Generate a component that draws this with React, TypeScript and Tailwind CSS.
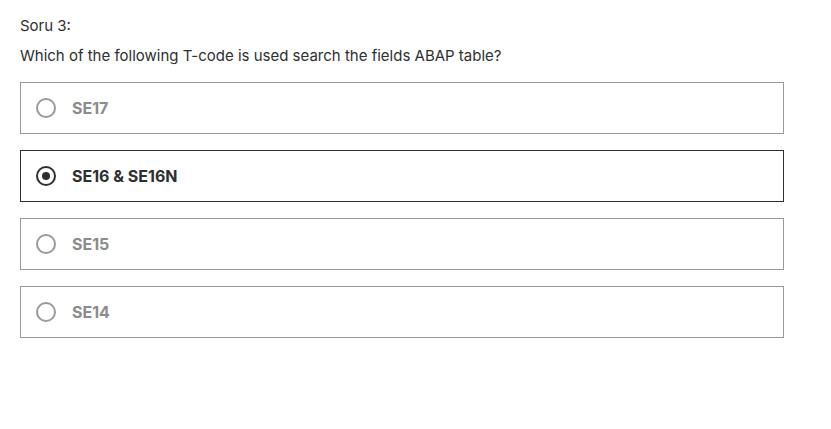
const options = ['SE17', 'SE16 & SE16N', 'SE15', 'SE14'];

const App = () => {
  const selected = 1;

  return (
    <div className="min-h-screen bg-white px-5 pt-[16px] text-[#2d2f31]" style={{ fontFamily: 'Inter, "Noto Sans", sans-serif' }}>
      <p className="text-[15px] leading-[20px]">Soru 3:</p>
      <p className="mt-[10px] text-[15px] leading-[20px]">Which of the following T-code is used search the fields ABAP table?</p>
      <div className="mt-[16px] flex w-[764px] flex-col gap-4">
        {options.map((opt, i) => {
          const active = i === selected;
          return (
            <div
              key={opt}
              className={`flex h-[52px] items-center gap-4 border px-[15px] ${active ? 'border-[#2d2f31]' : 'border-[#9a9a9a]'}`}
            >
              <span
                className={`flex h-5 w-5 items-center justify-center rounded-full border-2 ${active ? 'border-[#2d2f31]' : 'border-[#9a9a9a]'}`}
              >
                {active && <span className="h-2 w-2 rounded-full bg-[#2d2f31]" />}
              </span>
              <span className={`text-[16px] font-bold ${active ? 'text-[#2d2f31]' : 'text-[#8c8c8c]'}`}>{opt}</span>
            </div>
          );
        })}
      </div>
    </div>
  );
};

export default App;
